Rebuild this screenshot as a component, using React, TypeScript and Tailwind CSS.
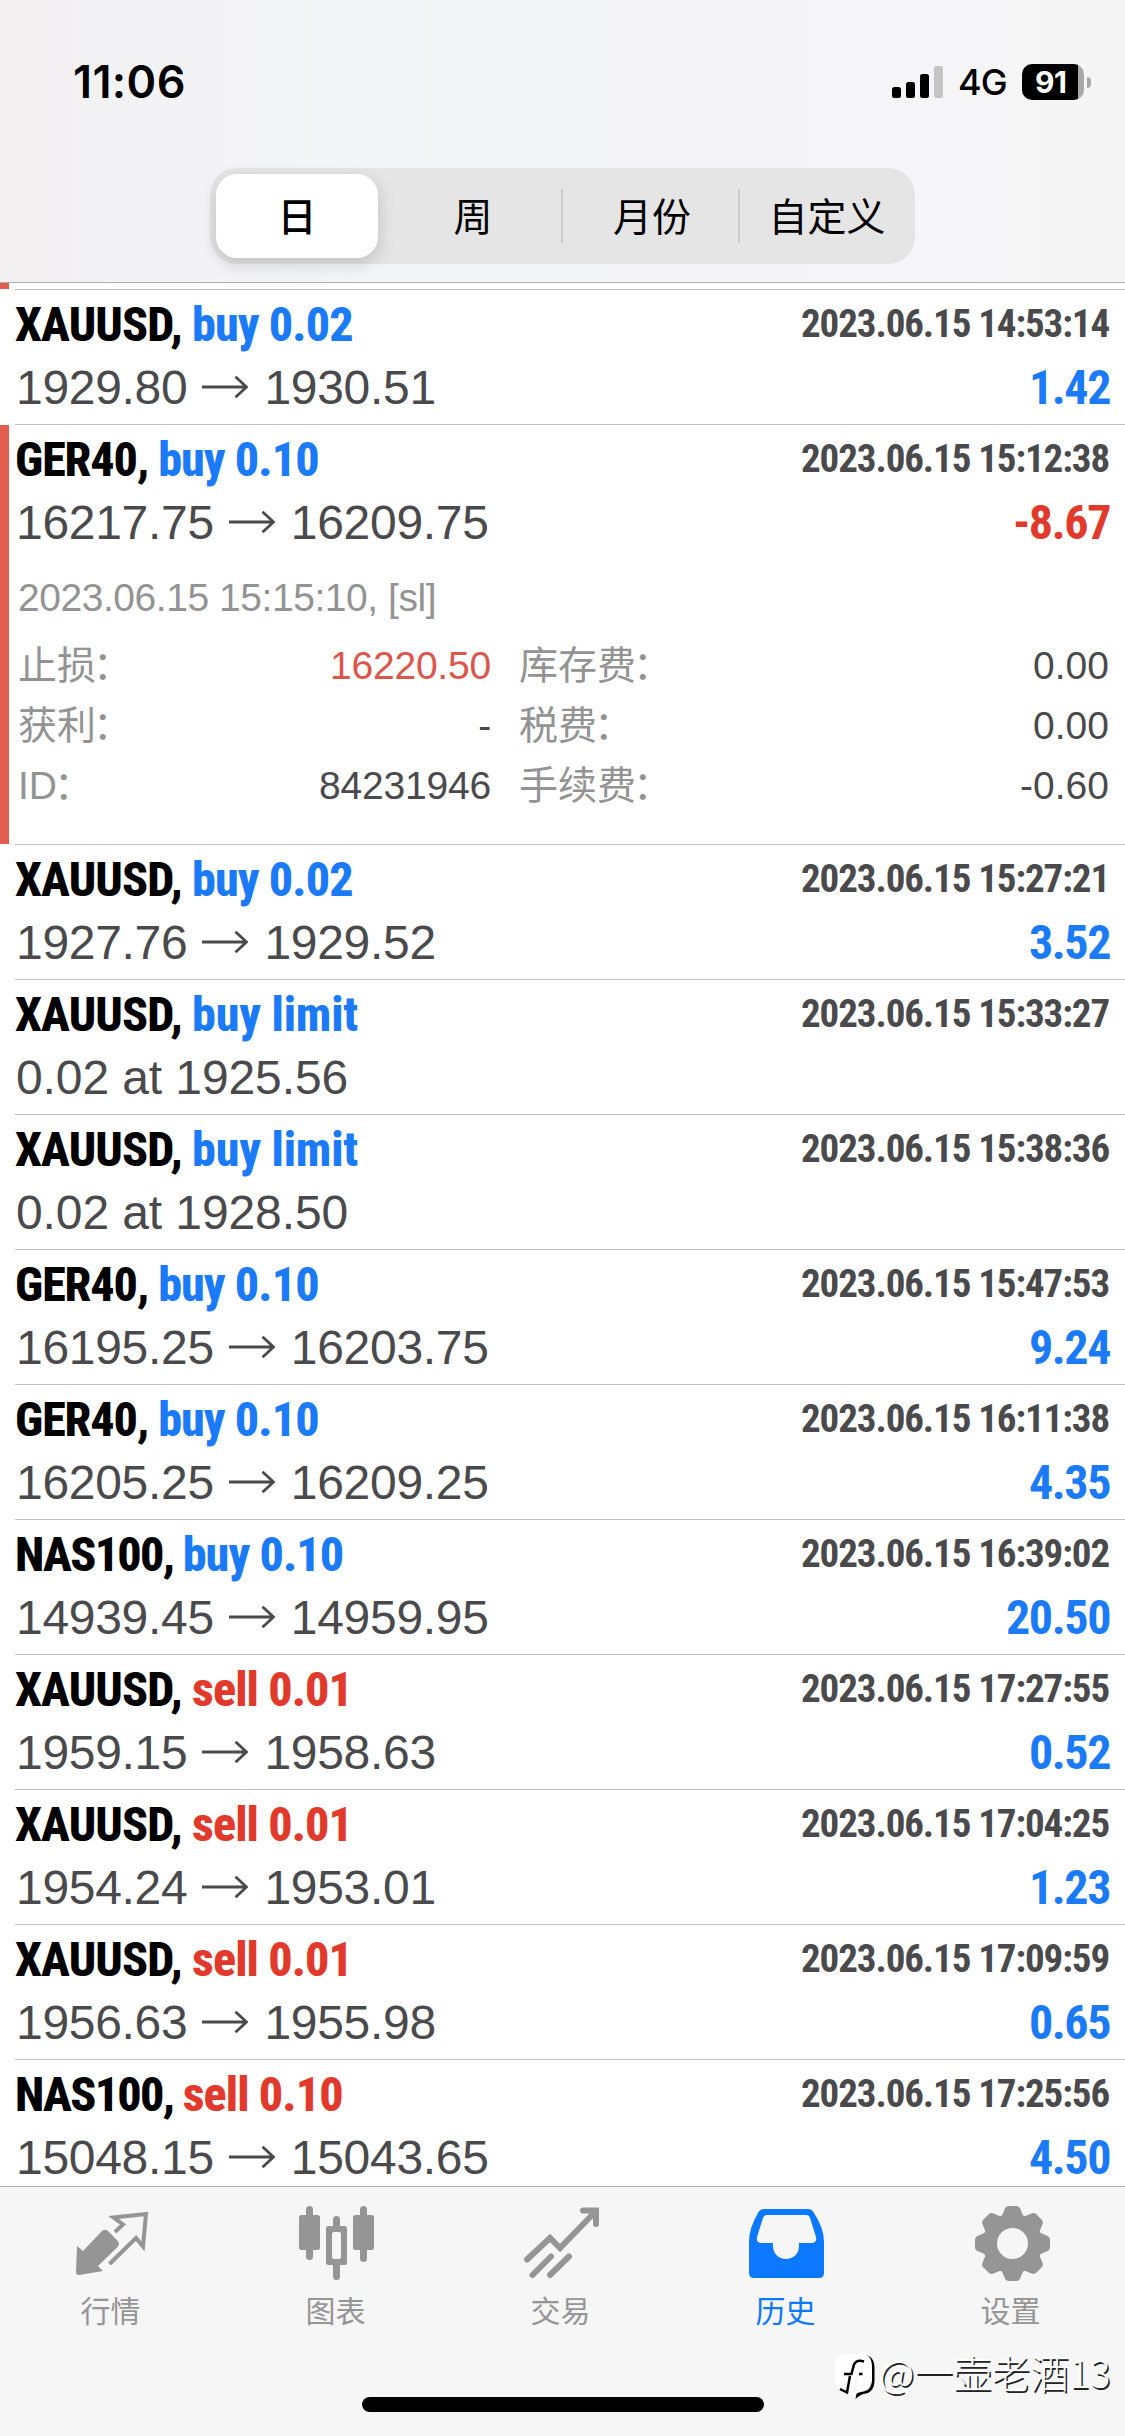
import type { ReactNode } from 'react';

type Trade = {
  symbol: string;
  action: string;
  side: 'buy' | 'sell';
  time: string;
  from?: string;
  to?: string;
  order?: string;
  profit?: string;
  expanded?: boolean;
};

const trades: Trade[] = [
  { symbol: 'XAUUSD', action: 'buy 0.02', side: 'buy', time: '2023.06.15 14:53:14', from: '1929.80', to: '1930.51', profit: '1.42' },
  { symbol: 'GER40', action: 'buy 0.10', side: 'buy', time: '2023.06.15 15:12:38', from: '16217.75', to: '16209.75', profit: '-8.67', expanded: true },
  { symbol: 'XAUUSD', action: 'buy 0.02', side: 'buy', time: '2023.06.15 15:27:21', from: '1927.76', to: '1929.52', profit: '3.52' },
  { symbol: 'XAUUSD', action: 'buy limit', side: 'buy', time: '2023.06.15 15:33:27', order: '0.02 at 1925.56' },
  { symbol: 'XAUUSD', action: 'buy limit', side: 'buy', time: '2023.06.15 15:38:36', order: '0.02 at 1928.50' },
  { symbol: 'GER40', action: 'buy 0.10', side: 'buy', time: '2023.06.15 15:47:53', from: '16195.25', to: '16203.75', profit: '9.24' },
  { symbol: 'GER40', action: 'buy 0.10', side: 'buy', time: '2023.06.15 16:11:38', from: '16205.25', to: '16209.25', profit: '4.35' },
  { symbol: 'NAS100', action: 'buy 0.10', side: 'buy', time: '2023.06.15 16:39:02', from: '14939.45', to: '14959.95', profit: '20.50' },
  { symbol: 'XAUUSD', action: 'sell 0.01', side: 'sell', time: '2023.06.15 17:27:55', from: '1959.15', to: '1958.63', profit: '0.52' },
  { symbol: 'XAUUSD', action: 'sell 0.01', side: 'sell', time: '2023.06.15 17:04:25', from: '1954.24', to: '1953.01', profit: '1.23' },
  { symbol: 'XAUUSD', action: 'sell 0.01', side: 'sell', time: '2023.06.15 17:09:59', from: '1956.63', to: '1955.98', profit: '0.65' },
  { symbol: 'NAS100', action: 'sell 0.10', side: 'sell', time: '2023.06.15 17:25:56', from: '15048.15', to: '15043.65', profit: '4.50' },
];

const symbolTracking: Record<string, string> = {
  XAUUSD: 'tracking-[-0.9px]',
  GER40: 'tracking-[-1.1px]',
  NAS100: 'tracking-[-1.7px]',
};

const details = [
  { left: '止损', leftValue: '16220.50', red: true, right: '库存费', rightValue: '0.00' },
  { left: '获利', leftValue: '-', red: false, right: '税费', rightValue: '0.00' },
  { left: 'ID', leftValue: '84231946', red: false, right: '手续费', rightValue: '-0.60' },
];

function StatusBar() {
  return (
    <div className="flex h-[168px] items-start justify-between pl-[73px] pr-[34px] pt-[55px]">
      <span className="font-['Inter',sans-serif] text-[45px] leading-[54px] font-semibold tracking-[0.4px]">11:06</span>
      <div className="flex h-[54px] items-center">
        <svg width="52" height="34" viewBox="0 0 52 34" className="mr-[14px]">
          <rect x="0" y="22" width="9" height="11" rx="2.5" />
          <rect x="14" y="17" width="9" height="16" rx="2.5" />
          <rect x="28" y="9" width="9" height="24" rx="2.5" />
          <rect x="42" y="1" width="9" height="32" rx="2.5" fill="#c4c4c4" />
        </svg>
        <span className="w-[50px] font-['Inter',sans-serif] text-[36px] font-[450] tracking-[-0.8px]">4G</span>
        <div className="ml-[14px] flex h-9 w-[62px] items-center overflow-hidden rounded-[10px] bg-gradient-to-r from-black from-[91%] to-[#a8a8a8] to-[91%] pl-[13px] font-['Inter',sans-serif] text-[30px] font-bold tracking-[-0.5px] text-white">
          91
        </div>
        <div className="ml-[3px] h-[11px] w-1 rounded-r-full bg-[#a8a8a8]" />
      </div>
    </div>
  );
}

function PeriodTabs() {
  return (
    <div className="mx-auto flex h-24 w-[705px] items-center rounded-[27px] bg-[#e5e5e6] px-[6px] font-['Noto_Sans_CJK_SC',sans-serif] text-[39px]">
      <div className="flex h-[84px] w-[162px] items-center justify-center rounded-[21px] bg-white pb-1 font-medium shadow-[0_6px_18px_rgba(0,0,0,0.16)]">日</div>
      <div className="flex flex-1 justify-center pb-1 pl-[7px]">周</div>
      <div className="h-[54px] w-[2px] bg-[#cdcdcf]" />
      <div className="flex w-[175px] justify-center pb-1 pl-[3px]">月份</div>
      <div className="h-[54px] w-[2px] bg-[#cdcdcf]" />
      <div className="flex w-[169px] justify-center pb-1 pl-[5px]">自定义</div>
    </div>
  );
}

function Arrow() {
  return (
    <svg width="46" height="24" viewBox="0 0 46 24" fill="none" stroke="currentColor" strokeWidth="2.8" className="-mt-[2px] mr-[16px] ml-[15px]">
      <path d="M0 12H44M33.5 1.8L44.5 12L33.5 22.2" />
    </svg>
  );
}

function Label({ children }: { children: string }) {
  return (
    <span className="text-[#939393]">
      {children}
      <span className="-ml-[3px]">：</span>
    </span>
  );
}

function TradeDetails() {
  return (
    <div className="pb-[28px] text-[39px] leading-[60px]">
      <p className="mt-[18px] pl-[3px] tracking-[-0.45px] text-[#939393]">2023.06.15 15:15:10, [sl]</p>
      <div className="mt-2 text-[#4a4a4c]">
        {details.map((d) => (
          <div key={d.left} className="flex h-[60px]">
            <div className="flex w-[476px] justify-between pl-[3px]">
              <Label>{d.left}</Label>
              <span className={d.red ? 'tracking-[-0.2px] text-[#dc564b]' : 'tracking-[-0.2px]'}>{d.leftValue}</span>
            </div>
            <div className="flex flex-1 justify-between pl-[28px]">
              <Label>{d.right}</Label>
              <span>{d.rightValue}</span>
            </div>
          </div>
        ))}
      </div>
    </div>
  );
}

function TradeRow({ trade }: { trade: Trade }) {
  const negative = trade.profit?.startsWith('-');
  return (
    <li className="flex">
      <div className={trade.expanded ? 'mb-px w-[9px] bg-[#e25d4e]' : 'w-[9px]'} />
      <div className="ml-[6px] flex-1 border-b border-[#c3c3c5] pr-[16px]">
        <div className="h-[134px] pt-[11px]">
          <div className="flex h-12 justify-between font-['Roboto_Condensed',sans-serif] text-[48px] leading-[48px] font-extrabold">
            <h2>
              <span className={symbolTracking[trade.symbol]}>{trade.symbol}, </span>
              <span
                className={`${trade.side === 'buy' ? 'text-[#1a7af8]' : 'text-[#e13a2c]'} ${trade.order ? 'tracking-[-0.2px]' : 'tracking-[-0.9px]'}`}
              >
                {trade.action}
              </span>
            </h2>
            <time className="text-[39px] leading-[47px] font-bold tracking-[-1.1px] text-[#4a4a4c]">{trade.time}</time>
          </div>
          <div className="mt-[11px] flex h-14 items-center justify-between pl-[1px] text-[48px] leading-[56px] text-[#4a4a4c]">
            {trade.order ? (
              <span className="tracking-[-0.1px]">{trade.order}</span>
            ) : (
              <span className="flex items-center tracking-[-0.3px]">
                {trade.from}
                <Arrow />
                {trade.to}
              </span>
            )}
            {trade.profit && (
              <span className={`-mr-px font-['Roboto_Condensed',sans-serif] font-bold tracking-[-1.4px] ${negative ? 'text-[#e13a2c]' : 'text-[#1a7af8]'}`}>
                {trade.profit}
              </span>
            )}
          </div>
        </div>
        {trade.expanded && <div className="-mt-[9px]"><TradeDetails /></div>}
      </div>
    </li>
  );
}

function QuotesIcon() {
  return (
    <svg width="100" height="95" viewBox="0 0 100 95" fill="none">
      <path d="M16 51L22 56L41 36Q44 33.500 47 36L57 46Q59 49 56.500 52L37 71L42 76L18 80Q15 80 15 77Z" fill="currentColor" />
      <path d="M54 37L62 29.500L52.500 22.500L85 19L82 51.500L75 43L48.500 69" stroke="currentColor" strokeWidth="4" />
    </svg>
  );
}

function ChartsIcon() {
  return (
    <svg width="100" height="95" viewBox="0 0 100 95" fill="currentColor">
      <rect x="20" y="11" width="7" height="54" rx="3.500" />
      <rect x="13" y="20" width="21" height="35" rx="2.500" />
      <rect x="74" y="11" width="7" height="56" rx="3.500" />
      <rect x="67" y="20" width="21" height="35" rx="2.500" />
      <path d="M47 31V24.500a3.500 3.500 0 0 1 7 0V31h4.500a2.500 2.500 0 0 1 2.500 2.500v34a2.500 2.500 0 0 1-2.500 2.500H54v11.500a3.500 3.500 0 0 1-7 0V70h-4.500a2.500 2.500 0 0 1-2.500-2.500v-34a2.500 2.500 0 0 1 2.500-2.500ZM48 37a2 2 0 0 0-2 2v23a2 2 0 0 0 2 2h5a2 2 0 0 0 2-2V39a2 2 0 0 0-2-2Z" fillRule="evenodd" />
    </svg>
  );
}

function TradeIcon() {
  return (
    <svg width="100" height="95" viewBox="-4 0 100 95" fill="none" stroke="currentColor" strokeWidth="6" strokeLinecap="round">
      <path d="M12 64.500L35 43L45 53L80 17M68 15.500H81V29" />
      <path d="M17.500 80L36 61.500M35 80L54 61.500" />
    </svg>
  );
}

function HistoryIcon() {
  return (
    <svg width="100" height="95" viewBox="0 0 100 95" fill="currentColor">
      <path d="M28 14H72Q76 14 78 18Q88 33 88 47V78Q88 83 83 83H18Q13 83 13 78V47Q13 33 22 18Q24 14 28 14ZM31 20Q28 20 27 23L21 42Q20 47 24 48H37V51C37 59 43 64 50 64C57 64 63 59 63 51V48H77Q81 47 80 42L74 23Q73 20 70 20Z" fillRule="evenodd" />
    </svg>
  );
}

function SettingsIcon() {
  const tooth = 'M40 23L43.500 14.500Q44.500 11 48 11H55Q58.500 11 59.500 14.500L63 23Z';
  return (
    <svg width="100" height="95" viewBox="0 0 100 95" fill="currentColor">
      {[0, 45, 90, 135, 180, 225, 270, 315].map((angle) => (
        <path key={angle} d={tooth} transform={`rotate(${angle} 51.5 48.5)`} />
      ))}
      <path d="M51.500 18.500a30 30 0 1 0 0 60a30 30 0 1 0 0-60ZM51.500 33a15.500 15.500 0 1 1 0 31a15.500 15.500 0 1 1 0-31Z" fillRule="evenodd" />
    </svg>
  );
}

function Tab({ icon, label, active }: { icon: ReactNode; label: string; active?: boolean }) {
  return (
    <div className={`flex w-[225px] flex-col items-center ${active ? 'text-[#0b78ff]' : 'text-[#959595]'}`}>
      <div className="mt-2">{icon}</div>
      <span className="-mt-[3px] font-['Noto_Sans_CJK_SC',sans-serif] text-[30px] leading-[44px]">{label}</span>
    </div>
  );
}

function Watermark() {
  return (
    <div className="absolute top-[2348px] left-[835px] flex h-[50px] items-center font-['Noto_Sans_CJK_SC',sans-serif] text-white">
      <svg width="44" height="52" viewBox="0 0 44 52" className="mt-[2px] shrink-0">
        <path d="M12 6H26Q38 6 38 19V31Q38 44 27 45Q21 47 19 50.500Q19 46 21 43L9 42Q0 38 0 30V19Q0 6 12 6Z" fill="#000" transform="translate(1.500 1)" />
        <path d="M12 6H26Q37 6 37 19V31Q37 43 26 44Q20 45 18 48L12.500 43Q0 43 0 30V19Q0 6 12 6Z" fill="#fff" />
        <path d="M29 13.500C22 11.500 19 14 18 20L16.500 26H9M15 28L12 44.500L5 41M24 26H27.500" stroke="#000" strokeWidth="2.500" fill="none" />
        <path d="M21 28L18 43L20 47L23 28Z" fill="#f6f6f6" />
      </svg>
      <span className="-mt-[5px] text-[38.700px] leading-[50px] font-light whitespace-nowrap [text-shadow:1.5px_1.5px_0_#222]">@一壶老酒13</span>
    </div>
  );
}

export default function App() {
  return (
    <main className="relative flex h-[2436px] w-[1125px] flex-col overflow-hidden bg-white font-['Liberation_Sans','Noto_Sans_CJK_SC',sans-serif] text-black">
      <header className="h-[283px] shrink-0 border-b border-[#b1b1b3] bg-gradient-to-r from-[#f2f0f1] via-[#f4f5f8] via-30% to-[#f6f5f6]">
        <StatusBar />
        <PeriodTabs />
      </header>
      <ul className="flex-1 overflow-hidden">
        <li className="flex h-[7px]">
          <div className="mb-px w-[9px] bg-[#e25d4e]" />
          <div className="ml-[6px] flex-1 border-b border-[#c3c3c5]" />
        </li>
        {trades.map((t) => (
          <TradeRow key={t.time} trade={t} />
        ))}
      </ul>
      <footer className="flex h-[250px] shrink-0 flex-col items-center border-t border-[#acacae] bg-[#f6f6f6]">
        <nav className="flex h-[210px] pr-1">
          <Tab icon={<QuotesIcon />} label="行情" />
          <Tab icon={<ChartsIcon />} label="图表" />
          <Tab icon={<TradeIcon />} label="交易" />
          <Tab icon={<HistoryIcon />} label="历史" active />
          <Tab icon={<SettingsIcon />} label="设置" />
        </nav>
        <div className="h-[15px] w-[402px] rounded-full bg-black" />
      </footer>
      <Watermark />
    </main>
  );
}
